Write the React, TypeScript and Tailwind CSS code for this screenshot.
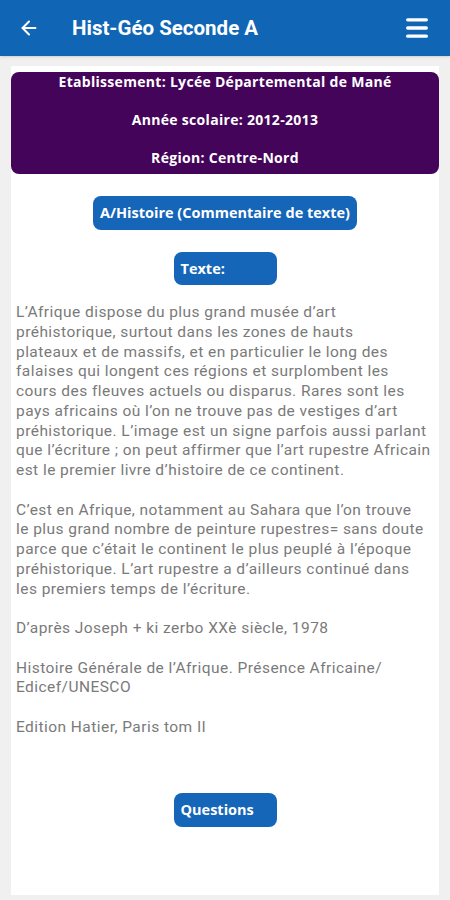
import { ArrowLeft, Menu } from 'lucide-react';

// line breaks follow the screenshot
const paragraphs = [
  [
    "L’Afrique dispose du plus grand musée d’art",
    "préhistorique, surtout dans les zones de hauts",
    "plateaux et de massifs, et en particulier le long des",
    "falaises qui longent ces régions et surplombent les",
    "cours des fleuves actuels ou disparus. Rares sont les",
    "pays africains où l’on ne trouve pas de vestiges d’art",
    "préhistorique. L’image est un signe parfois aussi parlant",
    "que l’écriture ; on peut affirmer que l’art rupestre Africain",
    "est le premier livre d’histoire de ce continent.",
  ],
  [
    "C’est en Afrique, notamment au Sahara que l’on trouve",
    "le plus grand nombre de peinture rupestres= sans doute",
    "parce que c’était le continent le plus peuplé à l’époque",
    "préhistorique. L’art rupestre a d’ailleurs continué dans",
    "les premiers temps de l’écriture.",
  ],
  ["D’après Joseph + ki zerbo XXè siècle, 1978"],
  ["Histoire Générale de l’Afrique. Présence Africaine/", "Edicef/UNESCO"],
  ["Edition Hatier, Paris tom II"],
];

export default function App() {
  return (
    <div className="w-[450px] h-[900px] bg-[#f0f0f0] flex flex-col overflow-hidden">
      {/* App bar */}
      <div className="h-[56px] bg-[#1066b5] flex items-center px-[18px] text-white shrink-0 shadow-sm">
        <ArrowLeft size={22} strokeWidth={2.2} />
        <h1 className="ml-[32px] text-[20.5px] font-bold font-['Roboto',sans-serif]">
          Hist-Géo Seconde A
        </h1>
        <div className="flex-1" />
        <Menu size={28} strokeWidth={2.8} className="mr-[1px]" />
      </div>

      {/* Card */}
      <div className="mx-[11px] mt-[10px] mb-[5px] flex-1 bg-white flex flex-col items-center font-['Open_Sans',sans-serif]">
        <div className="mt-[6px] w-full h-[102px] rounded-[8px] bg-[#44045a] text-white text-[14px] tracking-[0.3px] font-bold flex flex-col items-center gap-[18px] leading-[20px]">
          <p>Etablissement: Lycée Départemental de Mané</p>
          <p>Année scolaire: 2012-2013</p>
          <p>Région: Centre-Nord</p>
        </div>

        <button className="mt-[22px] h-[34px] px-[7px] rounded-[8px] bg-[#1565b8] text-white text-[14.5px] font-bold">
          A/Histoire (Commentaire de texte)
        </button>

        <button className="mt-[22px] h-[33px] w-[103px] pl-[7px] text-left rounded-[8px] bg-[#1565b8] text-white text-[14.5px] font-bold">
          Texte:
        </button>

        <div className="mt-[18px] self-stretch pl-[5px] text-[15.5px] tracking-[0.45px] leading-[19.75px] text-[#7a7a7a] font-['Roboto',sans-serif] flex flex-col gap-[19.75px]">
          {paragraphs.map((lines, i) => (
            <p key={i}>
              {lines.map((l, j) => (
                <span key={j} className="block whitespace-nowrap">
                  {l}
                </span>
              ))}
            </p>
          ))}
        </div>

        <button className="mt-[55px] h-[34px] w-[103px] pl-[7px] text-left rounded-[8px] bg-[#1565b8] text-white text-[14.5px] font-bold">
          Questions
        </button>
      </div>
    </div>
  );
}
